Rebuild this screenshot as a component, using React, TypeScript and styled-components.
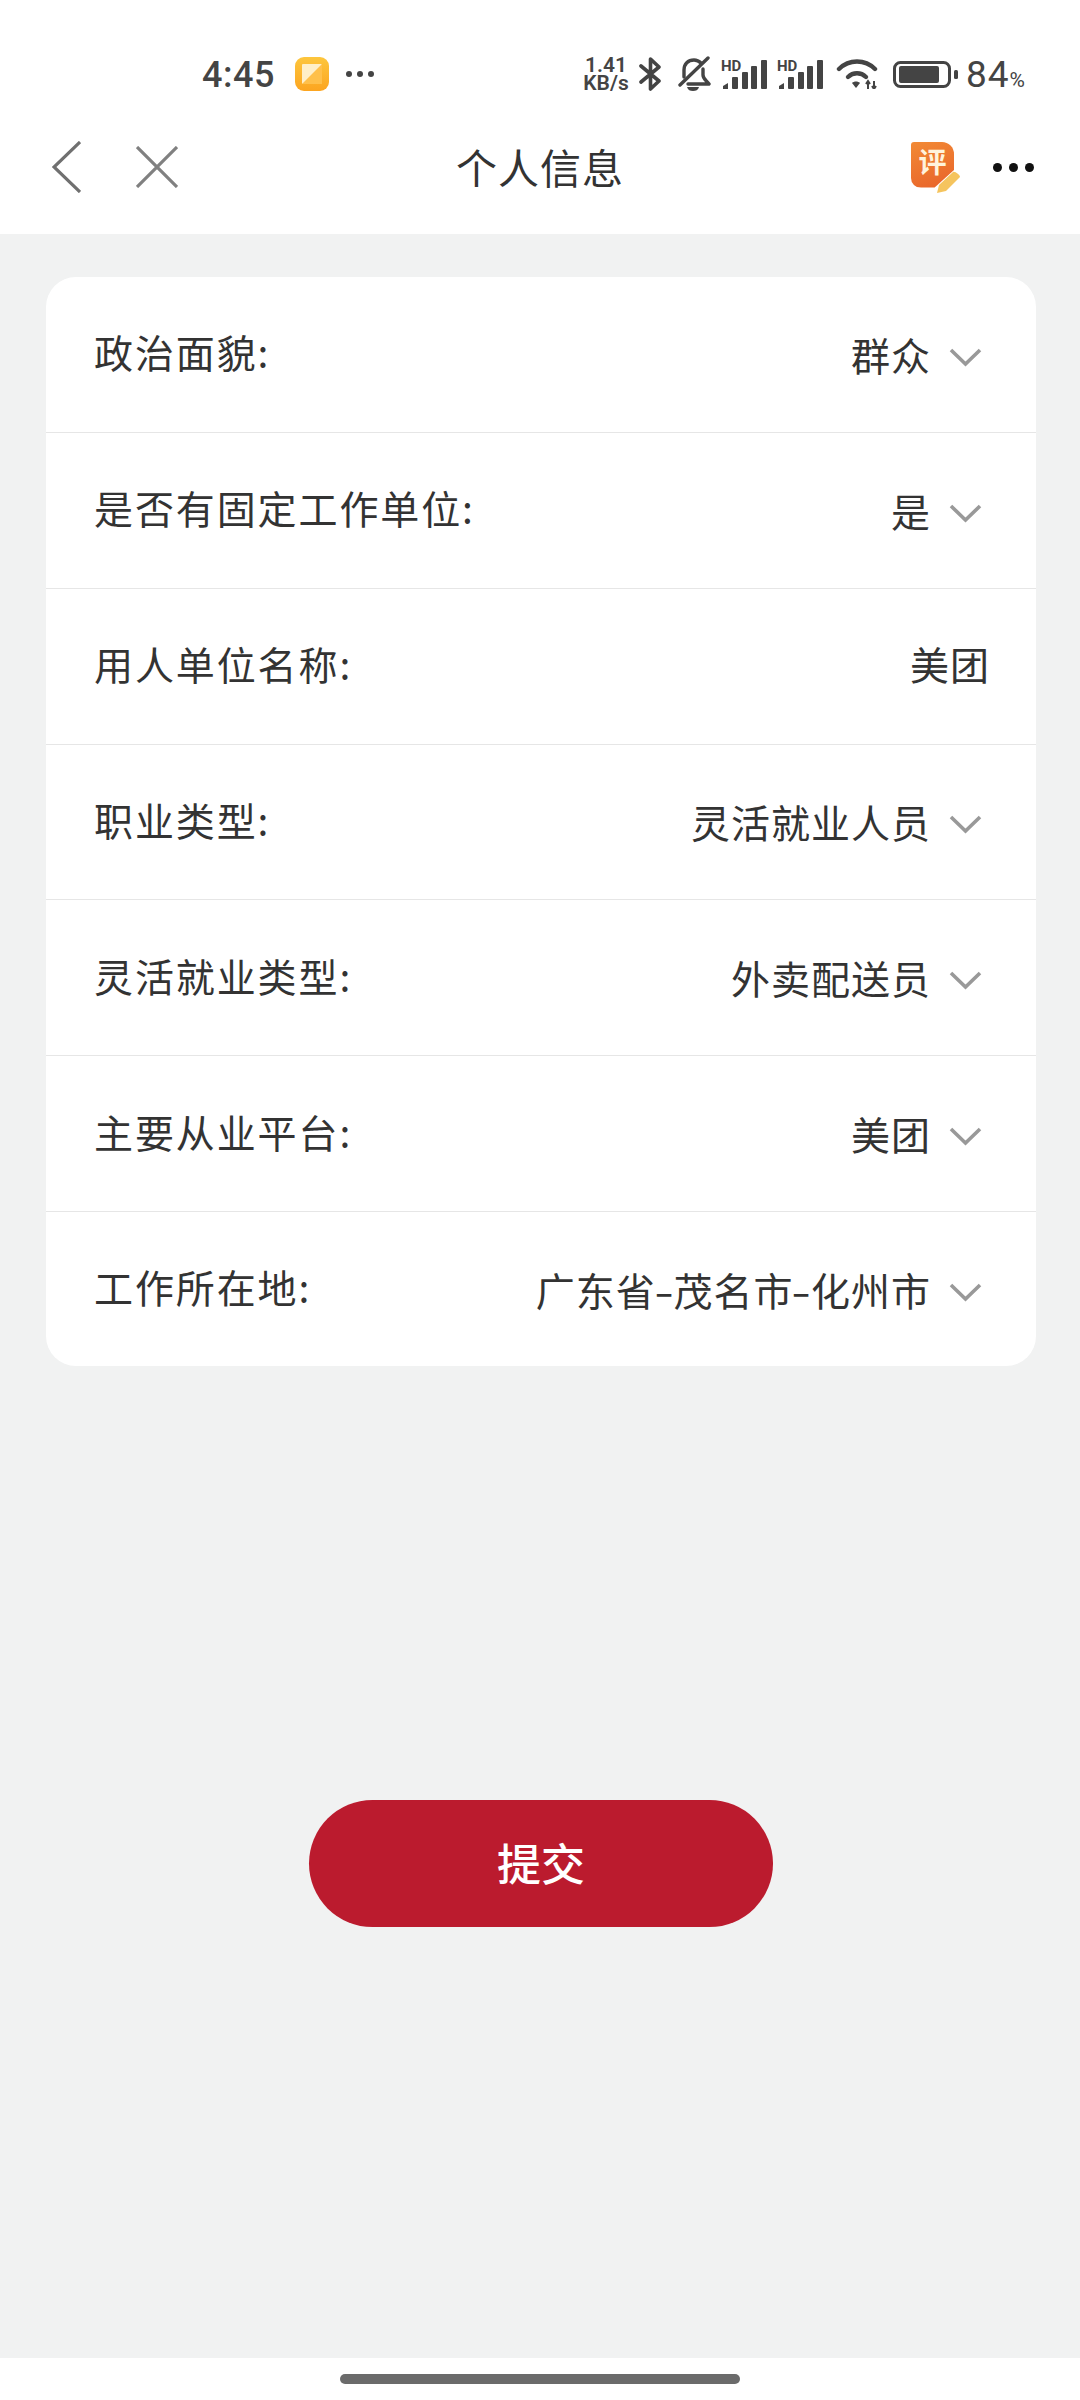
import React from "react";
import styled, { createGlobalStyle } from "styled-components";

const GlobalStyle = createGlobalStyle`
  html, body {
    margin: 0;
    padding: 0;
    background: #ffffff;
    font-family: "Noto Sans CJK SC", "Roboto", sans-serif;
  }
  * {
    box-sizing: border-box;
  }
`;

const Page = styled.div`
  display: flex;
  flex-direction: column;
  width: 1080px;
  height: 2400px;
  overflow: hidden;
`;

const StatusBar = styled.div`
  display: flex;
  align-items: center;
  justify-content: space-between;
  height: 120px;
  padding: 28px 55px 0 202px;
  color: #444444;
`;

const StatusLeft = styled.div`
  display: flex;
  align-items: center;
`;

const Time = styled.span`
  padding-top: 2px;
  font-family: "Roboto", sans-serif;
  font-size: 36px;
  font-weight: 500;
  letter-spacing: 0.5px;
  line-height: 40px;
`;

const StatusDots = styled.span`
  display: flex;
  margin-left: 17px;
`;

const StatusRight = styled.div`
  display: flex;
  align-items: center;
`;

const NetSpeed = styled.span`
  display: flex;
  flex-direction: column;
  align-items: center;
  width: 50px;
  margin-right: 8px;
  font-family: "Roboto", sans-serif;
  font-size: 21px;
  font-weight: 600;
  line-height: 18px;
`;

const BatteryText = styled.span`
  margin-left: 8px;
  padding-top: 7px;
  font-family: "Roboto", sans-serif;
  font-size: 37px;
  letter-spacing: 1px;
  line-height: 40px;
`;

const Percent = styled.span`
  font-size: 21px;
  letter-spacing: 0;
`;

const NavBar = styled.div`
  display: grid;
  grid-template-columns: 1fr auto 1fr;
  align-items: center;
  height: 114px;
  padding: 0 46px 20px;
`;

const NavLeft = styled.div`
  display: flex;
  align-items: center;
  gap: 55px;
  padding-left: 6px;
`;

const NavRight = styled.div`
  display: flex;
  align-items: center;
  justify-content: flex-end;
  gap: 32px;
`;

const Title = styled.div`
  padding-bottom: 2px;
  font-size: 41px;
  letter-spacing: 1px;
  line-height: 56px;
  color: #333333;
`;

const RateBadge = styled.div`
  position: relative;
  width: 50px;
  height: 51px;
`;

const RateSquare = styled.div`
  display: flex;
  align-items: center;
  justify-content: center;
  width: 43px;
  height: 46px;
  padding-bottom: 8px;
  border-radius: 3px 12px 10px 10px;
  background: linear-gradient(160deg, #f28a35, #e8622a);
  clip-path: polygon(0 0, 100% 0, 100% 62%, 55% 100%, 0 100%);
  color: #fff3dc;
  font-size: 28px;
  font-weight: 700;
  line-height: 38px;
`;

const PencilMark = styled.svg`
  position: absolute;
  right: 0;
  bottom: 0;
`;

const Main = styled.div`
  display: flex;
  flex: 1;
  flex-direction: column;
  align-items: center;
  padding: 43px 0 0 2px;
  background: #f1f2f2;
`;

const Card = styled.div`
  width: 990px;
  border-radius: 30px;
  background: #ffffff;
  overflow: hidden;
`;

const Row = styled.div`
  display: flex;
  align-items: center;
  justify-content: space-between;
  height: 155.85px;
  padding: 0 54px 0 48px;
  border-bottom: 1px solid #e6e6e6;

  &:last-child {
    height: 154px;
    border-bottom: none;
  }
`;

const Label = styled.span`
  padding-bottom: 6px;
  font-size: 39px;
  letter-spacing: 1.9px;
  line-height: 54px;
  color: #333333;
`;

const ValueGroup = styled.div`
  display: flex;
  align-items: center;
  gap: 18px;
`;

const Value = styled.span<{ $plain?: boolean }>`
  margin-right: ${(props) => (props.$plain ? "-8px" : "0")};
  padding-bottom: ${(props) => (props.$plain ? "6px" : "1px")};
  font-size: 39px;
  letter-spacing: 1px;
  line-height: 54px;
  color: #333333;
`;

const Dash = styled.span`
  display: inline-block;
  padding: 0 1.5px;
  transform: scaleX(1.45);
`;

const ChevronIcon = styled.svg`
  margin-top: 6px;
`;

const SubmitButton = styled.button`
  width: 464px;
  height: 127px;
  margin-top: 434px;
  padding: 0 0 3px;
  border: none;
  border-radius: 64px;
  background: #bb1b2e;
  color: #ffffff;
  font-family: inherit;
  font-size: 44px;
  font-weight: 500;
`;

const HomeArea = styled.div`
  display: flex;
  justify-content: center;
  height: 42px;
  padding-top: 16px;
`;

const HomeBar = styled.div`
  width: 400px;
  height: 10px;
  border-radius: 5px;
  background: #6b6b6b;
`;

const rows = [
  { label: "政治面貌:", value: "群众", arrow: true },
  { label: "是否有固定工作单位:", value: "是", arrow: true },
  { label: "用人单位名称:", value: "美团", arrow: false },
  { label: "职业类型:", value: "灵活就业人员", arrow: true },
  { label: "灵活就业类型:", value: "外卖配送员", arrow: true },
  { label: "主要从业平台:", value: "美团", arrow: true },
  { label: "工作所在地:", value: "广东省-茂名市-化州市", arrow: true },
];

const ICON = "#444444";

const AppIcon = () => (
  <svg width="34" height="34" viewBox="0 0 34 34" style={{ marginLeft: 20 }}>
    <defs>
      <linearGradient id="appBg" x1="0" y1="0" x2="0" y2="1">
        <stop offset="0" stopColor="#fdc63d" />
        <stop offset="1" stopColor="#fca520" />
      </linearGradient>
    </defs>
    <rect width="34" height="34" rx="9" fill="url(#appBg)" />
    <rect x="7" y="7" width="20" height="20" rx="1" fill="#ffefc8" />
    <path d="M27 7V27H7Z" fill="#ffc04a" />
  </svg>
);

const MoreDots = ({ r, gap, color }: { r: number; gap: number; color: string }) => (
  <svg width={r * 6 + gap * 2} height={r * 2} viewBox={`0 0 ${r * 6 + gap * 2} ${r * 2}`}>
    <circle cx={r} cy={r} r={r} fill={color} />
    <circle cx={r * 3 + gap} cy={r} r={r} fill={color} />
    <circle cx={r * 5 + gap * 2} cy={r} r={r} fill={color} />
  </svg>
);

const Bluetooth = () => (
  <svg width="23" height="36" viewBox="0 0 23 36" style={{ marginRight: 15 }}>
    <path
      d="M2 10L20 25L11.5 33V3L20 11L2 26"
      fill="none"
      stroke={ICON}
      strokeWidth="3.6"
      strokeLinejoin="round"
      strokeLinecap="round"
    />
  </svg>
);

const MutedBell = () => (
  <svg width="34" height="36" viewBox="0 0 34 36" style={{ marginRight: 10 }}>
    <g fill="none" stroke={ICON} strokeWidth="3.4" strokeLinecap="round" strokeLinejoin="round">
      <path d="M7 21V14C7 8 11 4 17 4C20 4 22 5 24 7" />
      <path d="M26 13V19C26 23 30 25 32 28H11" />
      <path d="M31 2L3 29" />
    </g>
    <path d="M10 31H22C21 34 19 35 16 35C13 35 11 34 10 31Z" fill={ICON} />
  </svg>
);

const Signal = () => (
  <svg width="46" height="33" viewBox="0 -4 46 33" style={{ marginRight: 10, marginTop: -4 }}>
    <text x="0" y="11" fontFamily="Roboto, sans-serif" fontSize="15" fontWeight="700" fill={ICON}>
      HD
    </text>
    <path d="M2 29V26L7 23V29Z" fill={ICON} />
    <rect x="11" y="17" width="6" height="12" rx="1" fill={ICON} />
    <rect x="21" y="12" width="6" height="17" rx="1" fill={ICON} />
    <rect x="30" y="6" width="6" height="23" rx="1" fill={ICON} />
    <rect x="40" y="0" width="6" height="29" rx="1" fill={ICON} />
  </svg>
);

const Wifi = () => (
  <svg width="42" height="30" viewBox="0 0 42 30" style={{ marginLeft: 3, marginRight: 15 }}>
    <g fill="none" stroke={ICON} strokeWidth="4.4" strokeLinecap="round">
      <path d="M3 10C13 0 29 0 39 10" />
      <path d="M12 18C17 13 25 13 30 18" />
    </g>
    <path d="M16 24C18 22 22 22 24 24L20 29Z" fill={ICON} />
    <path d="M32 23V30M30 25L32 22L34 25M38 22V29M36 27L38 30L40 27" fill="none" stroke={ICON} strokeWidth="2" />
  </svg>
);

const Battery = () => (
  <svg width="65" height="27" viewBox="0 0 65 27">
    <rect x="1.5" y="1.5" width="55" height="24" rx="6" fill="none" stroke={ICON} strokeWidth="3" />
    <rect x="6" y="5" width="40" height="17" rx="2" fill={ICON} />
    <rect x="61" y="9" width="4" height="9" rx="1.5" fill={ICON} />
  </svg>
);

const BackIcon = () => (
  <svg width="29" height="52" viewBox="0 0 29 52">
    <path d="M28 1L2 26L28 51" fill="none" stroke="#707070" strokeWidth="3.2" />
  </svg>
);

const CloseIcon = () => (
  <svg width="42" height="42" viewBox="0 0 42 42">
    <path d="M1 1L41 41M41 1L1 41" fill="none" stroke="#808080" strokeWidth="3.2" />
  </svg>
);

const Chevron = () => (
  <ChevronIcon width="33" height="19" viewBox="0 0 33 19">
    <path d="M2 2L16.5 16L31 2" fill="none" stroke="#999999" strokeWidth="3.6" />
  </ChevronIcon>
);

const renderValue = (value: string) =>
  value.split("-").map((part, index) => (
    <React.Fragment key={part + index}>
      {index > 0 && <Dash>-</Dash>}
      {part}
    </React.Fragment>
  ));

const App = () => {
  return (
    <Page>
      <GlobalStyle />
      <StatusBar>
        <StatusLeft>
          <Time>4:45</Time>
          <AppIcon />
          <StatusDots>
            <MoreDots r={3} gap={5} color={ICON} />
          </StatusDots>
        </StatusLeft>
        <StatusRight>
          <NetSpeed>
            <span>1.41</span>
            <span>KB/s</span>
          </NetSpeed>
          <Bluetooth />
          <MutedBell />
          <Signal />
          <Signal />
          <Wifi />
          <Battery />
          <BatteryText>
            84<Percent>%</Percent>
          </BatteryText>
        </StatusRight>
      </StatusBar>
      <NavBar>
        <NavLeft>
          <BackIcon />
          <CloseIcon />
        </NavLeft>
        <Title>个人信息</Title>
        <NavRight>
          <RateBadge>
            <RateSquare>评</RateSquare>
            <PencilMark width="24" height="22" viewBox="0 0 24 22">
              <path d="M0 22L2 14L16 1C18 0 23 4 23 6L9 20Z" fill="#f5c45e" />
            </PencilMark>
          </RateBadge>
          <MoreDots r={4.5} gap={7} color="#111111" />
        </NavRight>
      </NavBar>
      <Main>
        <Card>
          {rows.map((row) => (
            <Row key={row.label}>
              <Label>{row.label}</Label>
              <ValueGroup>
                <Value $plain={!row.arrow}>{renderValue(row.value)}</Value>
                {row.arrow && <Chevron />}
              </ValueGroup>
            </Row>
          ))}
        </Card>
        <SubmitButton>提交</SubmitButton>
      </Main>
      <HomeArea>
        <HomeBar />
      </HomeArea>
    </Page>
  );
};

export default App;
